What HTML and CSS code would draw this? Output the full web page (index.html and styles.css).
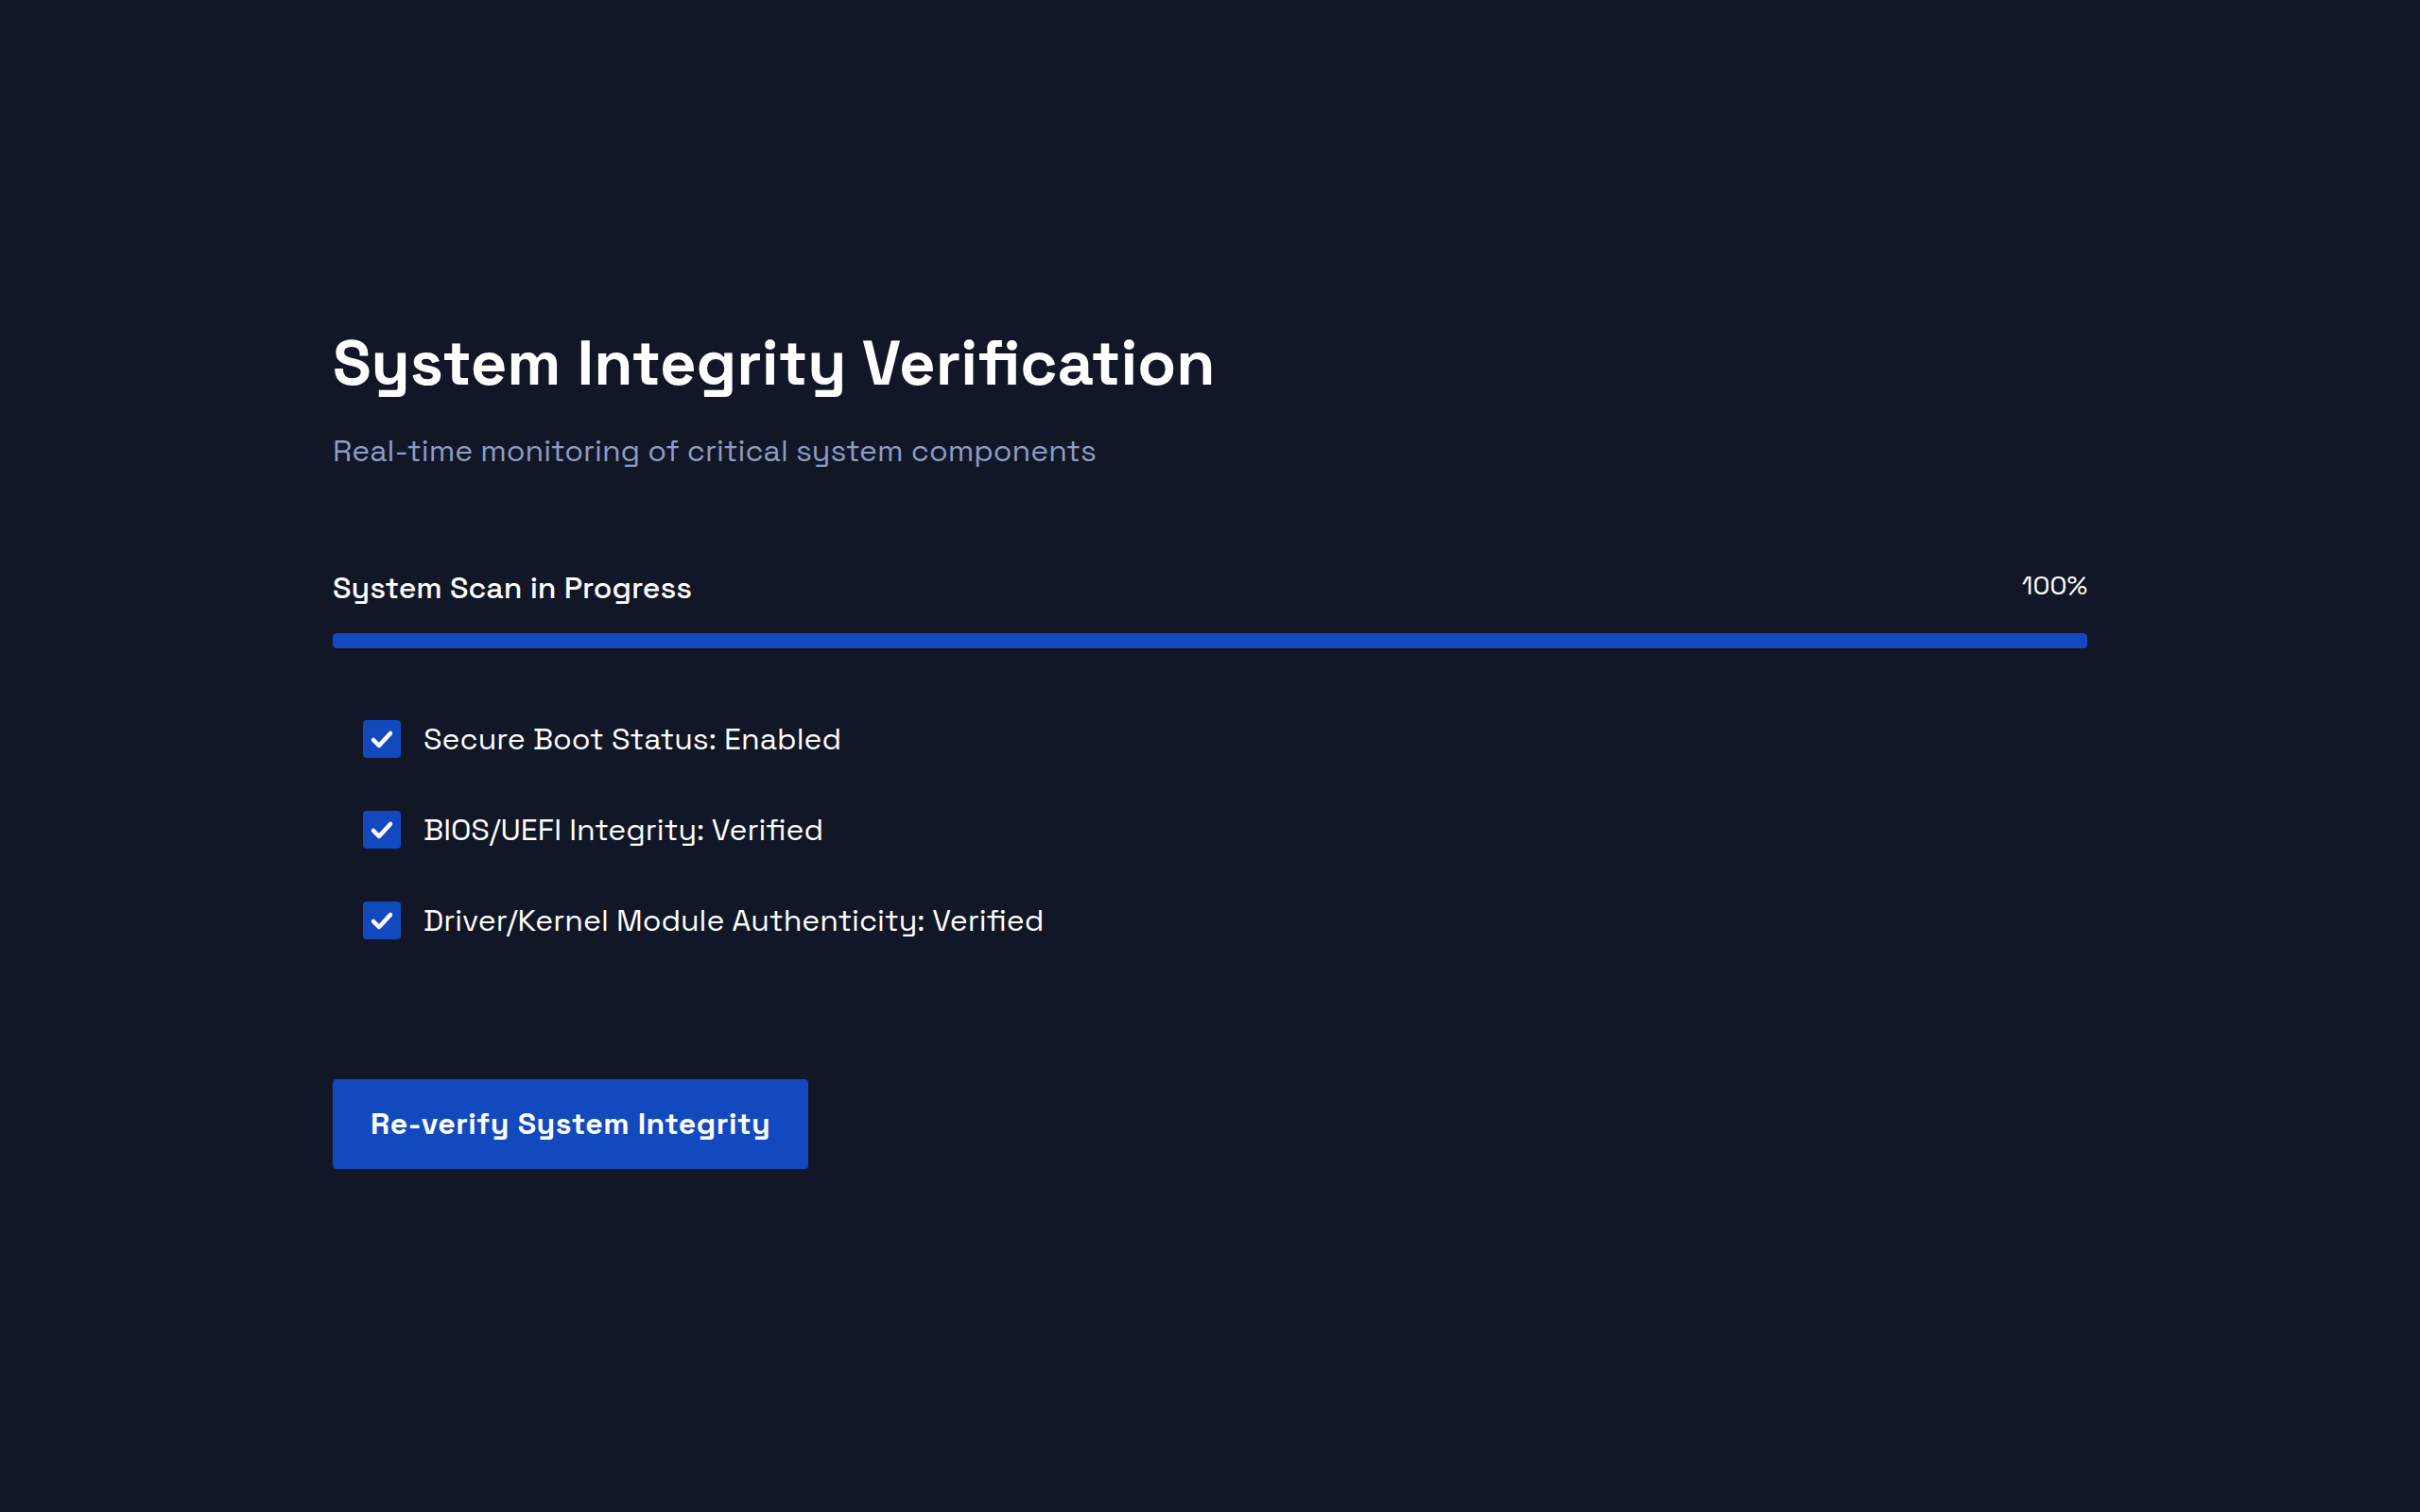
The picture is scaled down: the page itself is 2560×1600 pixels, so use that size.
FILE: index.html
```html
<!DOCTYPE html>
<html lang="en">
<head>
<meta charset="utf-8">
<title>System Integrity Verification</title>
<link rel="stylesheet" href="styles.css">
</head>
<body>
<main class="page">
  <h1 class="title">System Integrity Verification</h1>
  <p class="subtitle">Real-time monitoring of critical system components</p>

  <section class="scan">
    <div class="scan-head">
      <span class="scan-label">System Scan in Progress</span>
      <span class="scan-pct">100%</span>
    </div>
    <div class="bar"><div class="bar-fill" style="width:100%"></div></div>
  </section>

  <ul class="checks">
    <li class="check">
      <span class="box"><svg viewBox="0 0 40 40"><polyline points="11,21 17,27 29,14"/></svg></span>
      <span class="check-text">Secure Boot Status: Enabled</span>
    </li>
    <li class="check">
      <span class="box"><svg viewBox="0 0 40 40"><polyline points="11,21 17,27 29,14"/></svg></span>
      <span class="check-text">BIOS/UEFI Integrity: Verified</span>
    </li>
    <li class="check">
      <span class="box"><svg viewBox="0 0 40 40"><polyline points="11,21 17,27 29,14"/></svg></span>
      <span class="check-text">Driver/Kernel Module Authenticity: Verified</span>
    </li>
  </ul>

  <button class="btn" type="button">Re-verify System Integrity</button>
</main>
</body>
</html>
```

FILE: styles.css
```css
* { box-sizing: border-box; }

html, body {
  margin: 0;
  padding: 0;
  background: #111726;
  color: #ffffff;
  font-family: "Space Grotesk", Inter, "Noto Sans", sans-serif;
}

.page {
  max-width: 1856px;
  margin: 0 auto;
  padding-top: 346px;
  padding-bottom: 200px;
}

.title {
  margin: 0;
  font-size: 67px;
  line-height: 77px;
  font-weight: 700;
}

.subtitle {
  margin: 33px 0 0;
  font-size: 32px;
  line-height: 42px;
  color: #8d9dc4;
  font-weight: 400;
}

.scan {
  margin-top: 103px;
}

.scan-head {
  display: flex;
  justify-content: space-between;
  align-items: center;
}

.scan-label {
  font-size: 32px;
  line-height: 42px;
  font-weight: 500;
}

.scan-pct {
  font-size: 28px;
  line-height: 42px;
  font-weight: 400;
  margin-top: -6px;
}

.bar {
  margin-top: 27px;
  height: 16px;
  border-radius: 4px;
  background: #1f2a44;
  overflow: hidden;
}

.bar-fill {
  height: 100%;
  background: #1349be;
  border-radius: 4px;
}

.checks {
  list-style: none;
  margin: 75px 0 0;
  padding: 0 0 0 32px;
  display: flex;
  flex-direction: column;
  gap: 54px;
}

.check {
  display: flex;
  align-items: center;
  gap: 24px;
}

.box {
  width: 40px;
  height: 40px;
  border-radius: 4px;
  background: #1349be;
  display: flex;
  flex: none;
}

.box svg {
  width: 40px;
  height: 40px;
  fill: none;
  stroke: #ffffff;
  stroke-width: 4.5;
  stroke-linecap: round;
  stroke-linejoin: round;
}

.check-text {
  font-size: 32px;
  line-height: 42px;
  font-weight: 400;
}

.btn {
  display: block;
  margin-top: 147px;
  padding: 26px 40px;
  border: 0;
  border-radius: 4px;
  background: #1349be;
  color: #ffffff;
  font-family: inherit;
  font-size: 32px;
  line-height: 43px;
  font-weight: 700;
  letter-spacing: 0.5px;
  cursor: pointer;
}
```
